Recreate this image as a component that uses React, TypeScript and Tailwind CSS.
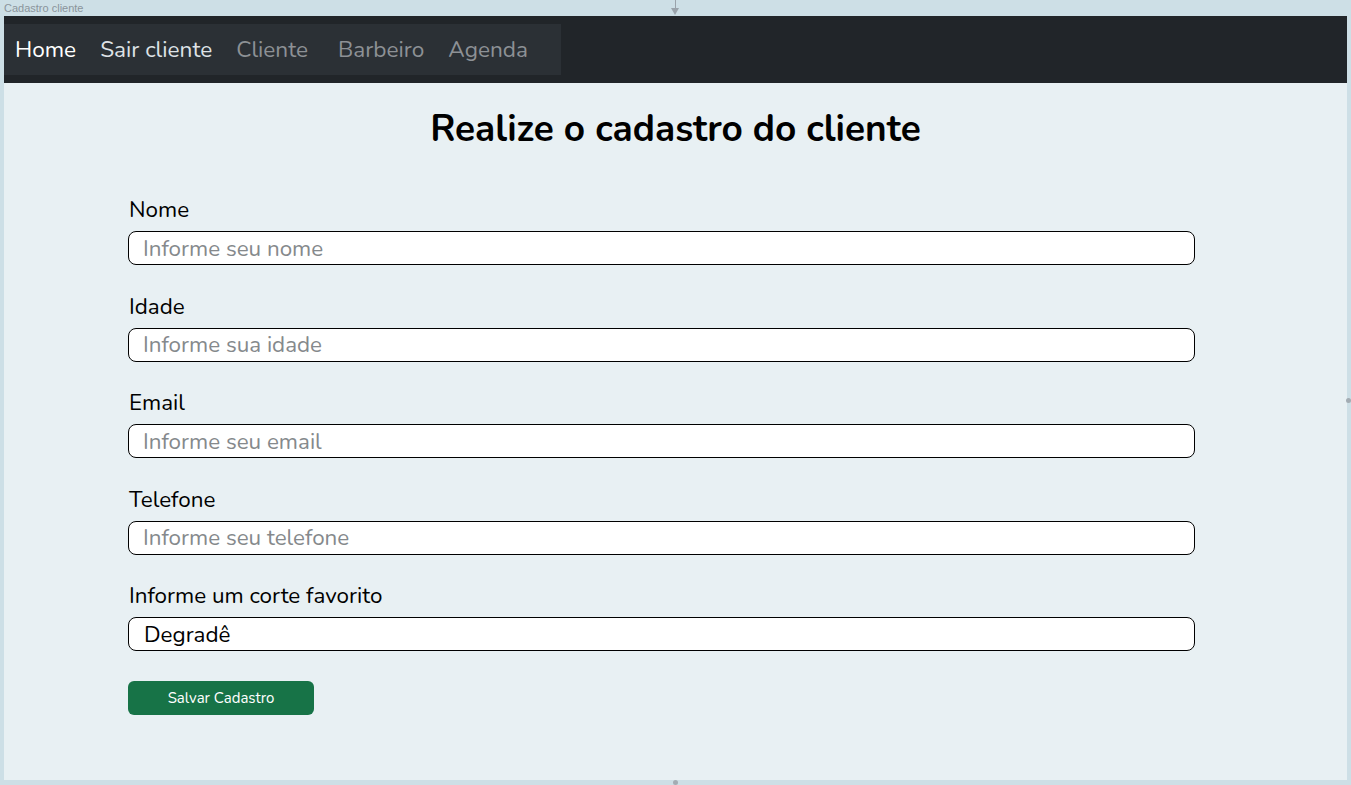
const fields = [
  { label: 'Nome', placeholder: 'Informe seu nome' },
  { label: 'Idade', placeholder: 'Informe sua idade' },
  { label: 'Email', placeholder: 'Informe seu email' },
  { label: 'Telefone', placeholder: 'Informe seu telefone' },
];

const links = [
  { label: 'Home', cls: 'text-white' },
  { label: 'Sair cliente', cls: 'text-[#dee2e6]' },
  { label: 'Cliente', cls: 'text-[#8d9195] pr-[6px]' },
  { label: 'Barbeiro', cls: 'text-[#8d9195]' },
  { label: 'Agenda', cls: 'text-[#8d9195]' },
];

export default function App() {
  return (
    <div
      className="min-h-screen bg-[#cddfe6] flex flex-col"
      style={{ fontFamily: 'Nunito, "Noto Sans", sans-serif' }}
    >
      {/* Barra do frame */}
      <div className="relative h-4 flex items-center px-1">
        <span className="text-[11px] leading-none text-[#8a949b]" style={{ fontFamily: '"Liberation Sans", sans-serif' }}>
          Cadastro cliente
        </span>
        <div className="absolute left-[671px] top-0 flex flex-col items-center">
          <div className="w-px h-2 bg-[#9aa3ab]" />
          <div className="w-0 h-0 border-l-[4px] border-r-[4px] border-t-[7px] border-l-transparent border-r-transparent border-t-[#9aa3ab]" />
        </div>
      </div>

      <div className="relative mx-1 h-[764px] bg-[#e8f0f3] flex flex-col">
        {/* Nav */}
        <nav className="h-[67px] bg-[#212529] pt-2">
          <ul className="w-[557px] h-[51px] bg-[#2b3035] flex items-center pl-[11px] pt-[1px] gap-6 text-[22.6px]">
            {links.map(({ label, cls }) => (
              <li key={label} className={cls}>{label}</li>
            ))}
          </ul>
        </nav>

        <h1 className="text-center font-bold text-[37px] text-black mt-[22px] leading-[48px]">
          Realize o cadastro do cliente
        </h1>

        <form className="ml-[124px] w-[1067px] mt-[43px] flex flex-col">
          {fields.map(({ label, placeholder }) => (
            <div key={label} className="flex flex-col mb-[27.5px]">
              <label className="text-[22.4px] leading-[28px] text-black ml-[1px]">{label}</label>
              <input
                placeholder={placeholder}
                className="mt-[7px] h-[34px] rounded-lg border border-black bg-white px-[14px] text-[22.4px] text-black placeholder:text-[#85898c] outline-none"
              />
            </div>
          ))}
          <div className="flex flex-col">
            <label className="text-[22.4px] leading-[28px] text-black ml-[1px]">Informe um corte favorito</label>
            <input
              defaultValue="Degradê"
              className="mt-[7px] h-[34px] rounded-lg border border-black bg-white px-[15px] text-[22.4px] text-black outline-none"
            />
          </div>
          <button
            type="button"
            className="mt-[30px] w-[186px] h-[34px] rounded-md bg-[#177347] text-white text-[15px]"
          >
            Salvar Cadastro
          </button>
        </form>

        <div className="absolute right-[-4px] top-[382px] w-[5px] h-[5px] rounded-full bg-[#a3acb3]" />
        <div className="absolute left-[669px] bottom-[-5px] w-[5px] h-[5px] rounded-full bg-[#a3acb3]" />
      </div>
    </div>
  );
}
